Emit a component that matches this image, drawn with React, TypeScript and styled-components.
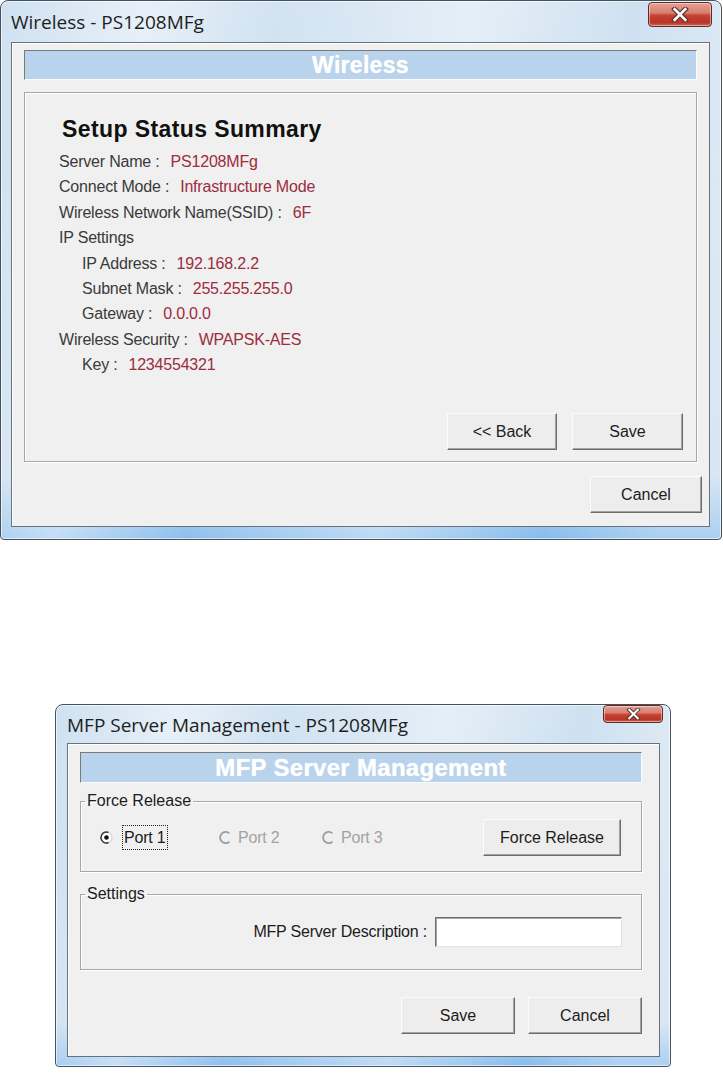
import React from "react";
import styled, { createGlobalStyle } from "styled-components";

const Global = createGlobalStyle`
  html, body { margin: 0; padding: 0; background: #ffffff; }
  body { font-family: "Liberation Sans", Arial, sans-serif; }
`;

const Page = styled.div`
  width: 723px;
  height: 1073px;
  display: flex;
  flex-direction: column;
  overflow: hidden;
`;

const Frame = styled.div<{
  $w: number;
  $h: number;
  $ml: number;
  $mt: number;
  $pl: number;
  $pr: number;
  $pb: number;
}>`
  box-sizing: border-box;
  width: ${(p) => p.$w}px;
  height: ${(p) => p.$h}px;
  margin: ${(p) => p.$mt}px 0 0 ${(p) => p.$ml}px;
  padding: 0 ${(p) => p.$pr}px ${(p) => p.$pb}px ${(p) => p.$pl}px;
  display: flex;
  flex-direction: column;
  border: 1px solid #45535f;
  border-radius: 8px 8px 4px 4px;
  background:
    linear-gradient(
      100deg,
      rgba(255, 255, 255, 0) 0%,
      rgba(255, 255, 255, 0.5) 18%,
      rgba(255, 255, 255, 0.05) 34%,
      rgba(255, 255, 255, 0.45) 58%,
      rgba(255, 255, 255, 0) 78%,
      rgba(255, 255, 255, 0.3) 92%
    ),
    linear-gradient(180deg, #cfe1f1 0%, #c8dcee 88%, #86bbec 100%);
  box-shadow: inset 0 0 0 1px rgba(255, 255, 255, 0.6);
`;

const TitleBar = styled.div<{ $h: number }>`
  height: ${(p) => p.$h}px;
  flex: none;
  display: flex;
  justify-content: space-between;
  align-items: flex-start;
`;

const TitleText = styled.div<{ $pt: number }>`
  padding-top: ${(p) => p.$pt}px;
  font-family: "Open Sans", "Noto Sans", sans-serif;
  font-size: 19px;
  line-height: 24px;
  color: #1e1e1e;
  white-space: nowrap;
`;

const CloseButton = styled.div<{ $w: number; $h: number; $mt: number; $mr: number }>`
  box-sizing: border-box;
  width: ${(p) => p.$w}px;
  height: ${(p) => p.$h}px;
  margin-top: ${(p) => p.$mt}px;
  margin-right: ${(p) => p.$mr}px;
  border: 1px solid #5e2a22;
  border-radius: 4px;
  background: linear-gradient(
    180deg,
    #e4a093 0%,
    #d9806f 42%,
    #c4402f 55%,
    #b93628 85%,
    #d06654 100%
  );
  box-shadow: inset 0 0 0 1px rgba(255, 255, 255, 0.45);
  display: flex;
  align-items: center;
  justify-content: center;
`;

const Client = styled.div<{ $pt: number; $pr: number; $pl: number }>`
  flex: 1;
  display: flex;
  flex-direction: column;
  padding: ${(p) => p.$pt}px ${(p) => p.$pr}px 0 ${(p) => p.$pl}px;
  background: #f0f0f0;
  border: 1px solid #66737f;
  box-shadow: inset 1px 1px 0 #ffffff;
`;

const Banner = styled.div<{ $h: number; $size: number; $mr: number }>`
  box-sizing: border-box;
  height: ${(p) => p.$h}px;
  margin-right: ${(p) => p.$mr}px;
  background: #b9d3ec;
  border-top: 1px solid #7a7a7a;
  border-left: 1px solid #7a7a7a;
  border-bottom: 1px solid #fbfbfb;
  border-right: 1px solid #fbfbfb;
  color: #ffffff;
  font-weight: bold;
  font-size: ${(p) => p.$size}px;
  line-height: ${(p) => p.$h - 2}px;
  letter-spacing: 0.3px;
  text-align: center;
  text-shadow: 0 0 1px rgba(255, 255, 255, 0.8);
`;

const SummaryBox = styled.div`
  box-sizing: border-box;
  height: 370px;
  margin: 12px 5px 0 0;
  padding: 22px 13px 11px 34px;
  display: flex;
  flex-direction: column;
  border: 1px solid #a7a7a7;
  box-shadow: inset 1px 1px 0 #ffffff, 1px 1px 0 #ffffff;
`;

const Heading = styled.div`
  margin: 0 0 6px 3px;
  font-weight: bold;
  font-size: 23px;
  line-height: 28px;
  letter-spacing: 0.4px;
  color: #111111;
`;

const InfoRow = styled.div<{ $indent?: boolean }>`
  padding-left: ${(p) => (p.$indent ? 23 : 0)}px;
  font-size: 16px;
  line-height: 25.4px;
  letter-spacing: -0.2px;
  color: #3a3a3a;
  white-space: nowrap;
`;

const Value = styled.span`
  margin-left: 11px;
  color: #9d2c3e;
`;

const ButtonRow = styled.div<{ $gap: number; $mt?: number }>`
  display: flex;
  justify-content: flex-end;
  gap: ${(p) => p.$gap}px;
  margin-top: ${(p) => (p.$mt === undefined ? "auto" : `${p.$mt}px`)};
`;

const Button = styled.button<{ $w: number }>`
  box-sizing: border-box;
  width: ${(p) => p.$w}px;
  height: 37px;
  flex: none;
  padding: 0;
  font-family: "Liberation Sans", Arial, sans-serif;
  font-size: 16px;
  color: #1c1c1c;
  background: #ededed;
  border: 1px solid;
  border-color: #fbfbfb #6c6c6c #6c6c6c #fbfbfb;
  box-shadow: inset -1px -1px 0 #a3a3a3;
  border-radius: 0;
`;

const Group = styled.fieldset<{ $mt: number }>`
  margin: ${(p) => p.$mt}px 0 0 0;
  padding: 0;
  min-width: 0;
  border: 1px solid #a7a7a7;
  box-shadow: inset 1px 1px 0 #ffffff, 1px 1px 0 #ffffff;
`;

const Legend = styled.legend`
  margin-left: 4px;
  padding: 0 2px;
  font-size: 16px;
  line-height: 18px;
  color: #1c1c1c;
`;

const RadioRow = styled.div`
  display: flex;
  align-items: center;
  padding: 9px 20px 15px 19px;
`;

const RadioItem = styled.div<{ $w?: number }>`
  display: flex;
  align-items: center;
  width: ${(p) => (p.$w ? `${p.$w}px` : "auto")};
  flex: none;
`;

const RadioLabel = styled.span<{ $focused?: boolean; $disabled?: boolean }>`
  margin-left: ${(p) => (p.$focused ? 9 : 4)}px;
  padding: 0 1px;
  border: 1px ${(p) => (p.$focused ? "dotted #222222" : "solid transparent")};
  font-size: 16px;
  line-height: 23px;
  letter-spacing: -0.2px;
  color: ${(p) => (p.$disabled ? "#a3a3a3" : "#1c1c1c")};
`;

const Spacer = styled.div`
  flex: 1;
`;

const SettingsRow = styled.div`
  display: flex;
  justify-content: flex-end;
  align-items: center;
  gap: 8px;
  padding: 14px 19px 22px 0;
`;

const FieldLabel = styled.span`
  font-size: 16px;
  letter-spacing: -0.2px;
  color: #1c1c1c;
  white-space: nowrap;
`;

const TextInput = styled.input`
  box-sizing: border-box;
  width: 187px;
  height: 30px;
  background: #ffffff;
  border: 1px solid;
  border-color: #6f6f6f #e2e2e2 #e2e2e2 #6f6f6f;
  box-shadow: inset 1px 1px 0 #a5a5a5;
  outline: none;
`;

const CloseGlyph = ({ w, h }: { w: number; h: number }) => (
  <svg width={w} height={h} viewBox="0 0 16 14">
    <path d="M3 2 L13 12 M13 2 L3 12" stroke="#5a3232" strokeWidth={4.6} strokeLinecap="square" />
    <path d="M3 2 L13 12 M13 2 L3 12" stroke="#ffffff" strokeWidth={2.4} strokeLinecap="square" />
  </svg>
);

const RadioGlyph = ({ checked, disabled }: { checked?: boolean; disabled?: boolean }) =>
  disabled ? (
    <svg width={13} height={13} viewBox="0 0 13 13">
      <path d="M10.4 2.3 A5.6 5.6 0 1 0 10.4 10.7" stroke="#9c9c9c" strokeWidth={1.8} fill="none" />
    </svg>
  ) : (
    <svg width={13} height={13} viewBox="0 0 13 13">
      <circle cx={6.5} cy={6.5} r={5.5} fill="#ffffff" stroke="#c4c4c4" />
      <path d="M8.5 1.4 A5.5 5.5 0 1 0 8.5 11.6" stroke="#3a3a3a" strokeWidth={1.6} fill="none" />
      {checked && <circle cx={6.5} cy={6.5} r={2.3} fill="#111111" />}
    </svg>
  );

const rows: { label: string; value?: string; indent?: boolean }[] = [
  { label: "Server Name :", value: "PS1208MFg" },
  { label: "Connect Mode :", value: "Infrastructure Mode" },
  { label: "Wireless Network Name(SSID) :", value: "6F" },
  { label: "IP Settings" },
  { label: "IP Address :", value: "192.168.2.2", indent: true },
  { label: "Subnet Mask :", value: "255.255.255.0", indent: true },
  { label: "Gateway :", value: "0.0.0.0", indent: true },
  { label: "Wireless Security :", value: "WPAPSK-AES" },
  { label: "Key :", value: "1234554321", indent: true },
];

export default function App() {
  return (
    <Page>
      <Global />
      <Frame $w={722} $h={540} $ml={0} $mt={0} $pl={10} $pr={11} $pb={12}>
        <TitleBar $h={41}>
          <TitleText $pt={9}>Wireless - PS1208MFg</TitleText>
          <CloseButton $w={64} $h={25} $mt={1} $mr={-2}>
            <CloseGlyph w={18} h={15} />
          </CloseButton>
        </TitleBar>
        <Client $pt={7} $pr={7} $pl={12}>
          <Banner $h={30} $size={23} $mr={5}>
            Wireless
          </Banner>
          <SummaryBox>
            <Heading>Setup Status Summary</Heading>
            {rows.map((r) => (
              <InfoRow key={r.label} $indent={r.indent}>
                {r.label}
                {r.value && <Value>{r.value}</Value>}
              </InfoRow>
            ))}
            <ButtonRow $gap={15}>
              <Button $w={110}>&lt;&lt; Back</Button>
              <Button $w={111}>Save</Button>
            </ButtonRow>
          </SummaryBox>
          <ButtonRow $gap={0} $mt={14}>
            <Button $w={112}>Cancel</Button>
          </ButtonRow>
        </Client>
      </Frame>

      <Frame $w={616} $h={363} $ml={55} $mt={164} $pl={11} $pr={10} $pb={9}>
        <TitleBar $h={38}>
          <TitleText $pt={8}>MFP Server Management - PS1208MFg</TitleText>
          <CloseButton $w={60} $h={18} $mt={0} $mr={-3}>
            <CloseGlyph w={15} h={12} />
          </CloseButton>
        </TitleBar>
        <Client $pt={8} $pr={17} $pl={12}>
          <Banner $h={31} $size={24} $mr={0}>
            MFP Server Management
          </Banner>
          <Group $mt={9}>
            <Legend>Force Release</Legend>
            <RadioRow>
              <RadioItem $w={119}>
                <RadioGlyph checked />
                <RadioLabel $focused>Port 1</RadioLabel>
              </RadioItem>
              <RadioItem $w={103}>
                <RadioGlyph disabled />
                <RadioLabel $disabled>Port 2</RadioLabel>
              </RadioItem>
              <RadioItem>
                <RadioGlyph disabled />
                <RadioLabel $disabled>Port 3</RadioLabel>
              </RadioItem>
              <Spacer />
              <Button $w={138}>Force Release</Button>
            </RadioRow>
          </Group>
          <Group $mt={13}>
            <Legend>Settings</Legend>
            <SettingsRow>
              <FieldLabel>MFP Server Description :</FieldLabel>
              <TextInput />
            </SettingsRow>
          </Group>
          <ButtonRow $gap={13} $mt={27}>
            <Button $w={114}>Save</Button>
            <Button $w={114}>Cancel</Button>
          </ButtonRow>
        </Client>
      </Frame>
    </Page>
  );
}
